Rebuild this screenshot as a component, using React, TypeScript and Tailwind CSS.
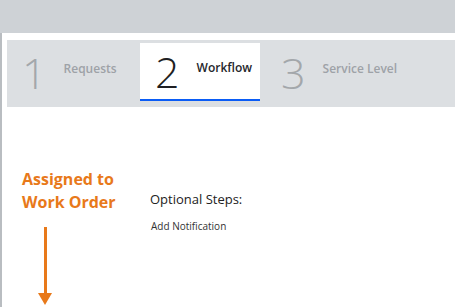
const tabs = [
  { n: '1', label: 'Requests', width: 'w-[133px]', pad: 'pl-[15px]', active: false },
  { n: '2', label: 'Workflow', width: 'w-[120px]', pad: 'pl-[15px]', active: true },
  { n: '3', label: 'Service Level', width: 'w-[160px]', pad: 'pl-[21px]', active: false },
];

export default function App() {
  return (
    <div className="h-[307px] w-[455px] overflow-hidden bg-white font-['Open_Sans',sans-serif]">
      <div className="h-[33px] bg-[#ced2d6]" />

      <div className="flex h-[274px] border-l-2 border-[#b9bdc1]">
        <div className="flex-1 pl-[5px] pt-[7px]">
          <div className="flex h-[67px] bg-[#dcdfe2] pt-[3px] pb-[6px]">
            {tabs.map((t) => (
              <div
                key={t.n}
                className={
                  t.active
                    ? `flex shrink-0 items-center gap-[17px] border-b-2 border-[#0a5cf5] bg-white ${t.pad} ${t.width}`
                    : `flex shrink-0 items-center gap-[17px] ${t.pad} ${t.width}`
                }
              >
                <span
                  className={
                    t.active
                      ? 'text-[43px] font-light leading-none text-[#1f1f23]'
                      : 'text-[43px] font-light leading-none text-[#a3a7ab]'
                  }
                >
                  {t.n}
                </span>
                <span
                  className={
                    t.active
                      ? 'pb-[7px] text-[12px] font-semibold text-[#25262b]'
                      : 'pb-[7px] text-[12px] font-semibold text-[#9ea2a7]'
                  }
                >
                  {t.label}
                </span>
              </div>
            ))}
          </div>

          <div className="flex pt-[61px]">
            <div className="flex w-[143px] flex-col">
              <div className="pl-[15px] text-[16px] font-bold leading-[23px] text-[#e8791a]">
                Assigned to
                <br />
                Work Order
              </div>
              <div className="ml-[31px] flex w-[14px] flex-col items-center pt-[13px]">
                <div className="h-[66px] w-[3px] bg-[#e8791a]" />
                <svg width="14" height="12" viewBox="0 0 14 12" className="block">
                  <path d="M0 0 L14 0 L7 12 Z" fill="#e8791a" />
                </svg>
              </div>
            </div>

            <div className="flex flex-col pt-[22px]">
              <span className="text-[13px] leading-[18px] text-[#222]">Optional Steps:</span>
              <span className="pl-px pt-[11px] text-[10px] text-[#333]">Add Notification</span>
            </div>
          </div>
        </div>
      </div>
    </div>
  );
}
